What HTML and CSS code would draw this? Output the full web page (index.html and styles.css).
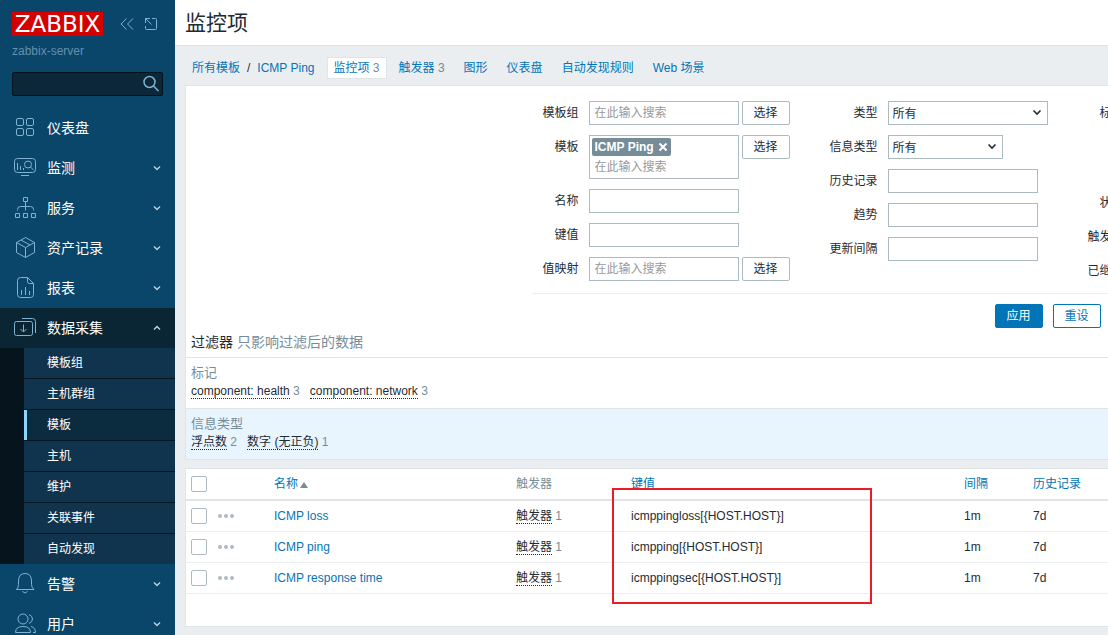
FILE: index.html
```html
<!DOCTYPE html>
<html lang="zh-CN">
<head>
<meta charset="utf-8">
<title>监控项</title>
<link rel="stylesheet" href="styles.css">
</head>
<body>
<div class="app">
  <aside class="sidebar">
    <div class="brand">
      <a class="logo" href="#">ZABBIX</a>
      <button class="icon-button" type="button" aria-label="收起">
        <svg width="16" height="16" viewBox="0 0 16 16"><path d="M7.500 2.500 2 8l5.500 5.500M14 2.500 8.500 8l5.500 5.500"/></svg>
      </button>
      <button class="icon-button" type="button" aria-label="隐藏">
        <svg width="16" height="16" viewBox="0 0 16 16"><path d="M9 2.500h3.500q1 0 1 1v9q0 1-1 1h-9q-1 0-1-1V10M8.500 8.500l-6-6M2.500 7V2.500H7"/></svg>
      </button>
    </div>
    <div class="server">zabbix-server</div>
    <form class="search">
      <input class="search-input" type="text" aria-label="搜索">
      <button class="search-button" type="button" aria-label="搜索">
        <svg width="18" height="18" viewBox="0 0 18 18"><circle cx="7.500" cy="7" r="5.500"/><path d="m11.500 11 5 5"/></svg>
      </button>
    </form>
    <nav class="menu">
      <a class="menu-item" href="#">
        <svg width="24" height="24" viewBox="0 0 24 24"><rect x="4.500" y="2.500" width="7" height="7" rx="1.500"/><rect x="14.500" y="2.500" width="7" height="7" rx="1.500"/><rect x="4.500" y="12.500" width="7" height="7" rx="1.500"/><rect x="14.500" y="12.500" width="7" height="7" rx="1.500"/></svg>
        <span>仪表盘</span>
      </a>
      <a class="menu-item" href="#">
        <svg width="24" height="24" viewBox="0 0 24 24"><rect x="2.500" y="2.500" width="21" height="14" rx="3"/><path d="M9 19.500h8M5.500 7v7M8.500 10v4M11.500 12v2M18.500 11l3 3"/><circle cx="16" cy="8.500" r="3.500"/></svg>
        <span>监测</span><svg class="chevron" width="8" height="8" viewBox="0 0 8 8"><path d="m1 2.500 3 3 3-3"/></svg>
      </a>
      <a class="menu-item" href="#">
        <svg width="24" height="24" viewBox="0 0 24 24"><path d="M11.500 1.500h4v4h-4zM3.500 17.500h4v4h-4zM11.500 17.500h4v4h-4zM19.500 17.500h4v4h-4zM13.500 5.500v9M5.500 14.500v-1q0-3 3-3h10q3 0 3 3v1"/></svg>
        <span>服务</span><svg class="chevron" width="8" height="8" viewBox="0 0 8 8"><path d="m1 2.500 3 3 3-3"/></svg>
      </a>
      <a class="menu-item" href="#">
        <svg width="24" height="24" viewBox="0 0 24 24"><path d="m13.500 1.500 9 5v10l-9 5-9-5v-10zM4.500 6.500l9 5 9-5M13.500 11.500v10M9 4l9 5"/></svg>
        <span>资产记录</span><svg class="chevron" width="8" height="8" viewBox="0 0 8 8"><path d="m1 2.500 3 3 3-3"/></svg>
      </a>
      <a class="menu-item" href="#">
        <svg width="24" height="24" viewBox="0 0 24 24"><path d="M15.500 1.500h-7q-3 0-3 3v14q0 3 3 3h10q3 0 3-3V7.500zM15.500 1.500v4q0 2 2 2h4M9.500 14v5M13.500 11v8M17.500 15v4"/></svg>
        <span>报表</span><svg class="chevron" width="8" height="8" viewBox="0 0 8 8"><path d="m1 2.500 3 3 3-3"/></svg>
      </a>
      <a class="menu-item menu-item-open" href="#">
        <svg width="24" height="24" viewBox="0 0 24 24"><rect x="2.500" y="5.500" width="18" height="14" rx="2"/><path d="M10 2.500h10.500q3 0 3 3V17M11.500 8.500V16M8.500 13l3 3 3-3"/></svg>
        <span>数据采集</span><svg class="chevron" width="8" height="8" viewBox="0 0 8 8"><path d="m1 5.500 3-3 3 3"/></svg>
      </a>
      <div class="submenu">
        <a class="submenu-item" href="#">模板组</a>
        <a class="submenu-item" href="#">主机群组</a>
        <a class="submenu-item submenu-current" href="#">模板</a>
        <a class="submenu-item" href="#">主机</a>
        <a class="submenu-item" href="#">维护</a>
        <a class="submenu-item" href="#">关联事件</a>
        <a class="submenu-item" href="#">自动发现</a>
      </div>
      <a class="menu-item" href="#">
        <svg width="24" height="24" viewBox="0 0 24 24"><path d="M4.500 17.500q2-2 2-5V9q0-7.500 6.500-7.500T19.500 9v3.500q0 3 2.500 5zM10.500 19.500q2.500 3 5 0"/></svg>
        <span>告警</span><svg class="chevron" width="8" height="8" viewBox="0 0 8 8"><path d="m1 2.500 3 3 3-3"/></svg>
      </a>
      <a class="menu-item" href="#">
        <svg width="24" height="24" viewBox="0 0 24 24"><circle cx="11" cy="7" r="5"/><path d="M17 2.500q3.500 1.500 3.500 4.500T17 11.500M3.500 20.500q0-6 7.500-6t7.500 6zM19 14.500q4.500 1 4.500 6h-2.500"/></svg>
        <span>用户</span><svg class="chevron" width="8" height="8" viewBox="0 0 8 8"><path d="m1 2.500 3 3 3-3"/></svg>
      </a>
    </nav>
  </aside>

  <main class="main">
    <header class="page-header"><h1 class="title">监控项</h1></header>
    <div class="content">
      <nav class="tabs">
        <span class="tab crumbs"><a href="#">所有模板</a><span>/</span><a href="#">ICMP Ping</a></span>
        <span class="tab tab-selected"><a href="#">监控项</a> <span class="count">3</span></span>
        <span class="tab"><a href="#">触发器</a> <span class="count">3</span></span>
        <a class="tab" href="#">图形</a>
        <a class="tab" href="#">仪表盘</a>
        <a class="tab" href="#">自动发现规则</a>
        <a class="tab" href="#">Web 场景</a>
      </nav>

      <section class="panel">
        <form class="filter">
          <div class="filter-columns">
            <div class="fields">
              <label for="groups">模板组</label>
              <div class="field"><input class="text" id="groups" type="text" placeholder="在此输入搜索"><button class="button" type="button">选择</button></div>
              <label for="templates">模板</label>
              <div class="field">
                <div class="multiselect">
                  <span class="chip">ICMP Ping<button class="chip-remove" type="button" aria-label="移除"><svg width="10" height="10" viewBox="0 0 10 10"><path d="m1.500 1.500 7 7M8.500 1.500l-7 7"/></svg></button></span>
                  <input class="multiselect-input" id="templates" type="text" placeholder="在此输入搜索">
                </div>
                <button class="button" type="button">选择</button>
              </div>
              <label for="name">名称</label>
              <div class="field"><input class="text" id="name" type="text"></div>
              <label for="key">键值</label>
              <div class="field"><input class="text" id="key" type="text"></div>
              <label for="valuemap">值映射</label>
              <div class="field"><input class="text" id="valuemap" type="text" placeholder="在此输入搜索"><button class="button" type="button">选择</button></div>
            </div>
            <div class="fields">
              <label for="type">类型</label>
              <div class="field"><select class="select select-wide" id="type"><option>所有</option></select></div>
              <label for="value-type">信息类型</label>
              <div class="field"><select class="select" id="value-type"><option>所有</option></select></div>
              <label for="history">历史记录</label>
              <div class="field"><input class="text" id="history" type="text"></div>
              <label for="trends">趋势</label>
              <div class="field"><input class="text" id="trends" type="text"></div>
              <label for="delay">更新间隔</label>
              <div class="field"><input class="text" id="delay" type="text"></div>
            </div>
            <div class="fields">
              <label for="tags">标记</label>
              <div class="field field-tall"><input class="text" id="tags" type="text"></div>
              <label for="state">状态</label>
              <div class="field"><input class="text" id="state" type="text"></div>
              <label for="triggers">触发器</label>
              <div class="field"><input class="text" id="triggers" type="text"></div>
              <label for="inherited">已继承</label>
              <div class="field"><input class="text" id="inherited" type="text"></div>
            </div>
          </div>
          <div class="actions">
            <button class="button button-primary" type="button">应用</button>
            <button class="button button-outline" type="button">重设</button>
          </div>
        </form>
        <h4 class="subfilter-title">过滤器 <span>只影响过滤后的数据</span></h4>
        <div class="subfilter">
          <h3>标记</h3>
          <div class="subfilter-values">
            <span><a class="dotted" href="#">component: health</a> <span class="count">3</span></span>
            <span><a class="dotted" href="#">component: network</a> <span class="count">3</span></span>
          </div>
        </div>
        <div class="subfilter subfilter-tinted">
          <h3>信息类型</h3>
          <div class="subfilter-values">
            <span><a class="dotted" href="#">浮点数</a> <span class="count">2</span></span>
            <span><a class="dotted" href="#">数字 (无正负)</a> <span class="count">1</span></span>
          </div>
        </div>
      </section>

      <section class="panel items">
        <table class="table">
          <colgroup><col class="col-check"><col class="col-menu"><col class="col-name"><col class="col-triggers"><col class="col-key"><col class="col-interval"><col></colgroup>
          <thead>
            <tr>
              <th><input class="check" type="checkbox" aria-label="全选"></th>
              <th></th>
              <th><a href="#">名称<span class="sort"></span></a></th>
              <th>触发器</th>
              <th><a href="#">键值</a></th>
              <th><a href="#">间隔</a></th>
              <th><a href="#">历史记录</a></th>
            </tr>
          </thead>
          <tbody>
            <tr>
              <td><input class="check" type="checkbox" aria-label="ICMP loss"></td>
              <td><button class="more" type="button" aria-label="菜单"><i></i><i></i><i></i></button></td>
              <td><a href="#">ICMP loss</a></td>
              <td><a class="dotted" href="#">触发器</a> <span class="count">1</span></td>
              <td>icmppingloss[{HOST.HOST}]</td><td>1m</td><td>7d</td>
            </tr>
            <tr>
              <td><input class="check" type="checkbox" aria-label="ICMP ping"></td>
              <td><button class="more" type="button" aria-label="菜单"><i></i><i></i><i></i></button></td>
              <td><a href="#">ICMP ping</a></td>
              <td><a class="dotted" href="#">触发器</a> <span class="count">1</span></td>
              <td>icmpping[{HOST.HOST}]</td><td>1m</td><td>7d</td>
            </tr>
            <tr>
              <td><input class="check" type="checkbox" aria-label="ICMP response time"></td>
              <td><button class="more" type="button" aria-label="菜单"><i></i><i></i><i></i></button></td>
              <td><a href="#">ICMP response time</a></td>
              <td><a class="dotted" href="#">触发器</a> <span class="count">1</span></td>
              <td>icmppingsec[{HOST.HOST}]</td><td>1m</td><td>7d</td>
            </tr>
          </tbody>
        </table>
        <div class="highlight"></div>
      </section>
    </div>
  </main>
</div>
</body>
</html>
```

FILE: styles.css
```css
* { box-sizing: border-box; }

body {
  margin: 0;
  background: #ebeef0;
  color: #1f2c33;
  font: 12px/14px "Liberation Sans", "Noto Sans CJK SC", sans-serif;
}

a { color: #0275b8; text-decoration: none; }
button, input, select { margin: 0; font: inherit; color: inherit; }
button { cursor: pointer; }
svg { fill: none; stroke: currentColor; }

.app { display: flex; height: 100vh; overflow: hidden; }

/* Sidebar */
.sidebar {
  flex: 0 0 175px;
  overflow: hidden;
  background: #0a466a;
  color: #7fb2d3;
}
.brand { display: flex; align-items: center; padding: 12px 12px 0; gap: 8px; }
.logo {
  width: 91px;
  margin-right: 8px;
  background: #d40000;
  color: #fff;
  font: 23px/24px "DejaVu Sans", sans-serif;
  text-align: center;
}
.icon-button { display: flex; padding: 0; border: 0; background: none; }
.server { padding: 8px 12px 0; color: #6490ad; }
.search {
  display: flex;
  height: 24px;
  margin: 14px 12px 12px;
  padding: 0 2px 0 6px;
  align-items: center;
  border: 1px solid #04131c;
  border-radius: 2px;
  background: #0b2738;
}
.search-input { flex: 1; min-width: 0; border: 0; outline: 0; background: none; color: #fff; }
.search-button { display: flex; padding: 0; border: 0; background: none; }
.search-button svg { stroke-width: 1.5; }
.menu-item {
  display: flex;
  height: 40px;
  align-items: center;
  gap: 11px;
  padding: 0 14px 0 12px;
  color: #7fb2d3;
}
.menu-item svg { flex: none; overflow: visible; }
.menu-item span { flex: 1; color: #fff; font-size: 14px; line-height: 20px; }
.menu-item .chevron { color: #b5cfe0; stroke-width: 1.5; }
.menu-item-open { background: #0a2534; }
.submenu {
  display: flex;
  flex-direction: column;
  gap: 1px;
  padding-left: 24px;
  background: #05141d;
}
.submenu-item {
  height: 30px;
  padding-left: 20px;
  border-left: 3px solid #10344d;
  background: #10344d;
  color: #fff;
  line-height: 30px;
}
.submenu-current { border-color: #8fd4ff; background: #0b2b3f; }

/* Page */
.main { flex: 1; min-width: 0; overflow: hidden; }
.page-header {
  height: 46px;
  padding: 8px 10px;
  border-bottom: 1px solid #dfe4e7;
  background: #fff;
}
.title { margin: 0; font-size: 21px; font-weight: 400; line-height: 30px; }
.content { min-width: 1745px; padding: 0 10px; }
.tabs { display: flex; align-items: center; gap: 5px; height: 39px; padding-top: 5px; }
.tab { padding: 3px 6px; border: 1px solid transparent; }
.tab-selected { border-color: #dfe4e7; background: #fff; }
.crumbs { display: flex; gap: 7px; }
.count { color: #768d99; }

.panel { border: 1px solid #dfe4e7; background: #fff; }

/* Filter */
.filter { width: 1030px; margin: 0 auto; }
.filter-columns {
  display: flex;
  align-items: flex-start;
  gap: 40px;
  padding: 15px 10px 10px;
  border-bottom: 1px solid #ebeef0;
}
.fields { display: grid; grid-template-columns: auto auto; gap: 10px; }
.fields label { line-height: 24px; text-align: right; }
.field { display: flex; align-items: flex-start; gap: 3px; }
.field-tall { height: 80px; }
.text, .select, .multiselect { border: 1px solid #acbbc2; border-radius: 0; background: #fff; }
.text { width: 150px; height: 24px; padding: 0 5px; }
.text::placeholder, .multiselect-input::placeholder { color: #999; }
.select {
  width: 115px;
  height: 24px;
  padding: 2px 20px 0 4px;
  appearance: none;
  background: #fff url("data:image/svg+xml,%3Csvg xmlns='http://www.w3.org/2000/svg' width='10' height='8'%3E%3Cpath d='m1.500 1.500 3.500 3.500 3.500-3.500' fill='none' stroke='%231f2c33' stroke-width='1.600'/%3E%3C/svg%3E") no-repeat right 5px center;
}
.select-wide { width: 160px; }
.multiselect { width: 150px; height: 44px; padding: 2px; }
.chip {
  display: inline-flex;
  align-items: center;
  gap: 4px;
  height: 18px;
  padding: 0 3px;
  border-radius: 2px;
  background: #768d99;
  color: #fff;
  font-weight: 700;
}
.chip-remove { display: flex; padding: 0; border: 0; background: none; }
.chip-remove svg { stroke-width: 2; }
.multiselect-input { display: block; width: 100%; height: 22px; padding: 0 3px; border: 0; outline: 0; background: none; }
.button {
  width: 48px;
  height: 24px;
  padding: 0;
  border: 1px solid #acbbc2;
  border-radius: 2px;
  background: #fff;
}
.button-primary { border-color: #0275b8; background: #0275b8; color: #fff; }
.button-outline { border-color: #0275b8; color: #0275b8; }
.actions { display: flex; justify-content: center; gap: 10px; padding: 10px 0 4px; }

.subfilter-title { margin: 0; padding: 0 5px 5px; font-size: 14px; font-weight: 400; line-height: 20px; }
.subfilter-title span { color: #768d99; }
.subfilter { height: 51px; padding: 7px 5px 0; border-top: 1px solid #dfe4e7; }
.subfilter-tinted { background: #e8f5ff; }
.subfilter h3 { margin: 0; color: #768d99; font-size: 13px; font-weight: 400; line-height: 16px; }
.subfilter-values { display: flex; gap: 10px; padding-top: 3px; }
.dotted { border-bottom: 1px dotted #1f2c33; color: #1f2c33; }

/* Items */
.items { position: relative; margin-top: 8px; padding-bottom: 32px; }
.table { width: 100%; border-collapse: separate; border-spacing: 0; table-layout: fixed; }
.table th, .table td { height: 31px; padding: 0 5px; border-bottom: 1px solid #ebeef0; text-align: left; font-weight: 400; }
.table th { height: 32px; border-bottom: 2px solid #dfe4e7; color: #768d99; }
.col-check { width: 27px; }
.col-menu { width: 56px; }
.col-name { width: 242px; }
.col-triggers { width: 115px; }
.col-key { width: 333px; }
.col-interval { width: 69px; }
.check {
  display: block;
  width: 16px;
  height: 16px;
  appearance: none;
  border: 1px solid #acbbc2;
  border-radius: 2px;
  background: #fff;
}
.more { display: flex; gap: 2px; padding: 0; border: 0; background: none; }
.more i { width: 4px; height: 4px; border-radius: 50%; background: #acbbc2; }
.sort {
  display: inline-block;
  margin-left: 2px;
  border: 4px solid transparent;
  border-top: 0;
  border-bottom: 6px solid #768d99;
}
.highlight {
  position: absolute;
  top: 19px;
  left: 426px;
  width: 260px;
  height: 116px;
  border: 2px solid #ed1c24;
  pointer-events: none;
}
```
